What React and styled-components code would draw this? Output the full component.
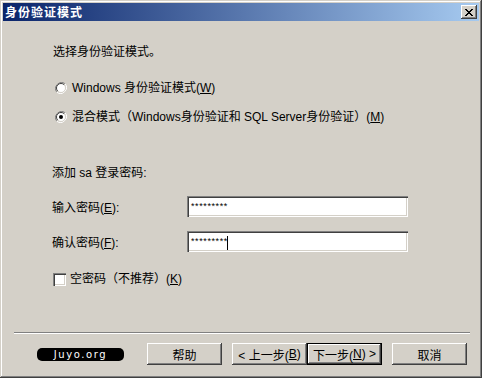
import React from "react";
import styled, { createGlobalStyle } from "styled-components";

const GlobalStyle = createGlobalStyle`
  html, body {
    margin: 0;
    padding: 0;
    background: #d4d0c8;
  }
  * {
    box-sizing: border-box;
  }
`;

const FONT = `"Liberation Sans", "Noto Sans CJK SC", sans-serif`;

// Dialog frame
const Window = styled.div`
  width: 482px;
  height: 378px;
  padding: 3px;
  display: flex;
  flex-direction: column;
  background: #d4d0c8;
  box-shadow: inset -1px -1px #404040, inset 1px 1px #d4d0c8,
    inset -2px -2px #808080, inset 2px 2px #ffffff;
  font-family: ${FONT};
  font-size: 12px;
  color: #000;
`;

const TitleBar = styled.div`
  height: 18px;
  display: flex;
  align-items: center;
  justify-content: space-between;
  padding: 0 2px 0 2px;
  background: linear-gradient(to right, #0a246a, #a6caf0);
`;

const Title = styled.span`
  color: #fff;
  font-weight: bold;
  font-size: 12px;
  letter-spacing: 1px;
  line-height: 18px;
  font-family: "Noto Sans CJK SC", sans-serif;
`;

const CloseButton = styled.div`
  width: 16px;
  height: 14px;
  display: flex;
  align-items: center;
  justify-content: center;
  background: #d4d0c8;
  box-shadow: inset -1px -1px #404040, inset 1px 1px #ffffff,
    inset -2px -2px #808080;
`;

const Body = styled.div`
  flex: 1;
  display: flex;
  flex-direction: column;
`;

const Content = styled.div`
  flex: 1;
  display: flex;
  flex-direction: column;
  padding: 23px 0 0 50px;
`;

const Text = styled.div`
  line-height: 16px;
  height: 16px;
  margin-top: ${({ $top }) => $top || 0}px;
  margin-left: ${({ $left }) => $left || 0}px;
  white-space: nowrap;
`;

const OptionRow = styled.label`
  display: flex;
  align-items: center;
  height: 16px;
  line-height: 16px;
  margin-top: ${({ $top }) => $top}px;
  margin-left: ${({ $left }) => $left || 0}px;
  white-space: nowrap;
`;

const OptionText = styled.span`
  margin-left: ${({ $gap }) => $gap}px;
`;

const FieldRow = styled.div`
  display: flex;
  align-items: center;
  height: 21px;
  margin-top: ${({ $top }) => $top}px;
  margin-left: -1px;
`;

const FieldLabel = styled.span`
  width: 135px;
  white-space: nowrap;
`;

const TextBox = styled.div`
  width: 221px;
  height: 21px;
  background: #fff;
  padding: 2px 4px 0 4px;
  display: flex;
  align-items: center;
  box-shadow: inset 1px 1px #808080, inset 2px 2px #404040,
    inset -1px -1px #ffffff, inset -2px -2px #d4d0c8;
`;

const Masked = styled.span`
  font-family: "Liberation Sans", sans-serif;
  font-size: 9px;
  letter-spacing: 0.6px;
  line-height: 10px;
  margin-top: -3px;
`;

const Caret = styled.span`
  width: 1px;
  height: 14px;
  background: #000;
  margin-left: -1px;
`;

const CheckBox = styled.span`
  width: 13px;
  height: 13px;
  background: #fff;
  box-shadow: inset 1px 1px #808080, inset 2px 2px #404040,
    inset -1px -1px #ffffff, inset -2px -2px #d4d0c8;
`;

// Footer with etched separator and buttons
const Footer = styled.div`
  display: flex;
  flex-direction: column;
  padding-bottom: 10px;
`;

const Separator = styled.div`
  height: 2px;
  margin: 0 9px 9px 11px;
  border-top: 1px solid #808080;
  border-bottom: 1px solid #ffffff;
`;

const ButtonRow = styled.div`
  display: flex;
  align-items: center;
  height: 22px;
  padding-left: 34px;
`;

const Badge = styled.div`
  width: 87px;
  height: 13px;
  border-radius: 5px;
  background: #000;
  color: #fff;
  font-family: "DejaVu Sans", sans-serif;
  font-size: 10px;
  letter-spacing: 1.6px;
  line-height: 13px;
  text-align: center;
`;

const Button = styled.div`
  width: 75px;
  height: 22px;
  margin-left: ${({ $gap }) => $gap}px;
  display: flex;
  align-items: center;
  justify-content: center;
  background: #d4d0c8;
  white-space: nowrap;
  box-shadow: ${({ $default }) =>
    $default
      ? "inset 1px 1px #000, inset -1px -1px #000, inset -2px -2px #404040, inset 2px 2px #ffffff, inset -3px -3px #808080"
      : "inset -1px -1px #404040, inset 1px 1px #ffffff, inset -2px -2px #808080"};
`;

const Key = styled.u`
  text-underline-offset: 1px;
`;

const RadioIcon = ({ checked }) => (
  <svg width="12" height="12" viewBox="0 0 12 12">
    <path d="M10.2 1.8 A6 6 0 0 0 1.8 10.2" fill="none" stroke="#808080" strokeWidth="1" />
    <path d="M1.8 10.2 A6 6 0 0 0 10.2 1.8" fill="none" stroke="#ffffff" strokeWidth="1" />
    <circle cx="6" cy="6" r="4.6" fill="#fff" />
    <path d="M9.2 2.8 A4.5 4.5 0 0 0 2.8 9.2" fill="none" stroke="#404040" strokeWidth="1" />
    <path d="M2.8 9.2 A4.5 4.5 0 0 0 9.2 2.8" fill="none" stroke="#d4d0c8" strokeWidth="1" />
    {checked && <circle cx="6" cy="6" r="2" fill="#000" />}
  </svg>
);

const CloseIcon = () => (
  <svg width="8" height="7" viewBox="0 0 8 7" shapeRendering="crispEdges">
    <path
      d="M0 0h2v1h-2zM6 0h2v1h-2zM1 1h2v1h-2zM5 1h2v1h-2zM2 2h4v1h-4zM3 3h2v1h-2zM2 4h4v1h-4zM1 5h2v1h-2zM5 5h2v1h-2zM0 6h2v1h-2zM6 6h2v1h-2z"
      fill="#000"
    />
  </svg>
);

const App = () => {
  return (
    <>
      <GlobalStyle />
      <Window>
        <TitleBar>
          <Title>身份验证模式</Title>
          <CloseButton>
            <CloseIcon />
          </CloseButton>
        </TitleBar>
        <Body>
          <Content>
            <Text>选择身份验证模式。</Text>
            <OptionRow $top={20} $left={2}>
              <RadioIcon />
              <OptionText $gap={5}>
                Windows 身份验证模式(<Key>W</Key>)
              </OptionText>
            </OptionRow>
            <OptionRow $top={13} $left={2}>
              <RadioIcon checked />
              <OptionText $gap={5}>
                混合模式（Windows身份验证和 SQL Server身份验证）(<Key>M</Key>)
              </OptionText>
            </OptionRow>
            <Text $top={40} $left={-1}>
              添加 sa 登录密码:
            </Text>
            <FieldRow $top={15}>
              <FieldLabel>
                输入密码(<Key>E</Key>):
              </FieldLabel>
              <TextBox>
                <Masked>*********</Masked>
              </TextBox>
            </FieldRow>
            <FieldRow $top={14}>
              <FieldLabel>
                确认密码(<Key>F</Key>):
              </FieldLabel>
              <TextBox>
                <Masked>*********</Masked>
                <Caret />
              </TextBox>
            </FieldRow>
            <OptionRow $top={19}>
              <CheckBox />
              <OptionText $gap={4}>
                空密码（不推荐）(<Key>K</Key>)
              </OptionText>
            </OptionRow>
          </Content>
          <Footer>
            <Separator />
            <ButtonRow>
              <Badge>Juyo.org</Badge>
              <Button $gap={23}>帮助</Button>
              <Button $gap={10}>
                &lt; 上一步(<Key>B</Key>)
              </Button>
              <Button $gap={0} $default>
                下一步(<Key>N</Key>) &gt;
              </Button>
              <Button $gap={10}>取消</Button>
            </ButtonRow>
          </Footer>
        </Body>
      </Window>
    </>
  );
};

export default App;
